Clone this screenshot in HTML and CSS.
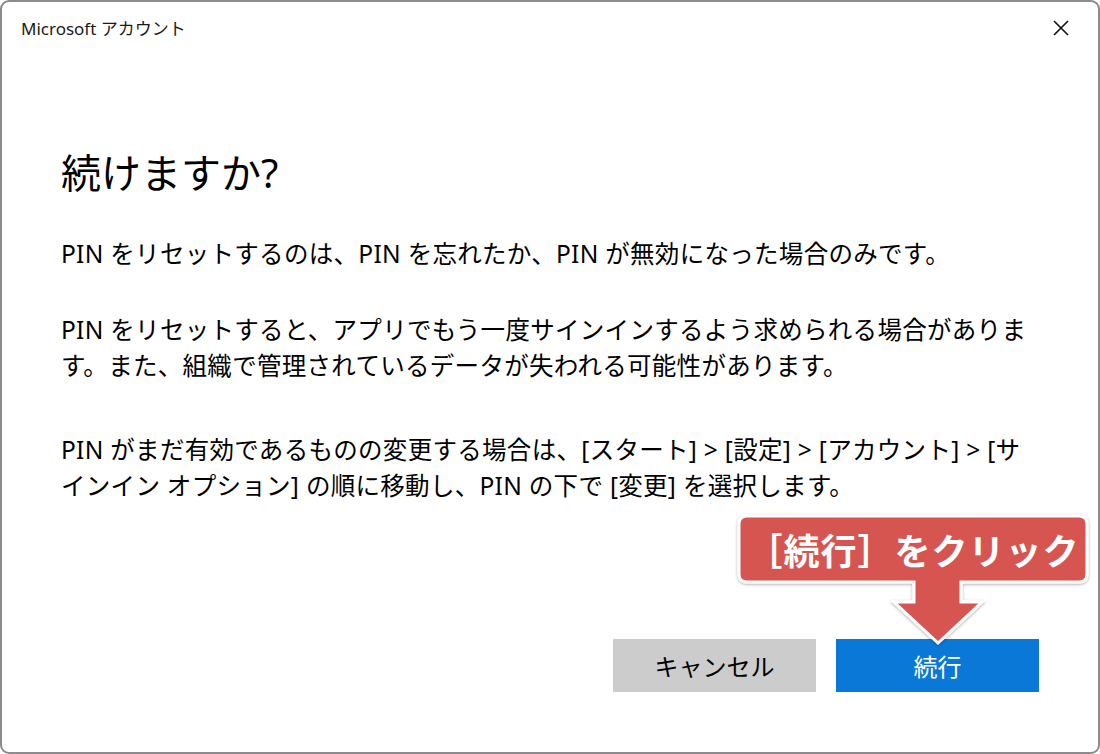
FILE: index.html
```html
<!DOCTYPE html>
<html lang="ja">
<head>
<meta charset="utf-8">
<title>Microsoft アカウント</title>
<link rel="stylesheet" href="styles.css">
</head>
<body>
<div class="window">
  <div class="titlebar">
    <span class="title">Microsoft アカウント</span>
    <span class="close">
      <svg width="16" height="16" viewBox="0 0 16 16"><path d="M1 1 L15 15 M15 1 L1 15" stroke="#111" stroke-width="1.6" fill="none"/></svg>
    </span>
  </div>
  <div class="content">
    <h1 class="heading">続けますか?</h1>
    <p class="para p1">PIN をリセットするのは、PIN を忘れたか、PIN が無効になった場合のみです。</p>
    <p class="para p2">PIN をリセットすると、アプリでもう一度サインインするよう求められる場合がありま<br>す。また、組織で管理されているデータが失われる可能性があります。</p>
    <p class="para p3">PIN がまだ有効であるものの変更する場合は、[スタート] &gt; [設定] &gt; [アカウント] &gt; [サ<br>インイン オプション] の順に移動し、PIN の下で [変更] を選択します。</p>
  </div>
  <div class="footer">
    <button class="btn cancel">キャンセル</button>
    <button class="btn primary">続行</button>
  </div>
  <div class="callout">
    <svg class="callout-shape" width="360" height="140" viewBox="-6 -6 360 140">
      <defs>
        <filter id="sh" x="-10%" y="-10%" width="120%" height="130%">
          <feDropShadow dx="0" dy="1" stdDeviation="1.5" flood-color="#000" flood-opacity="0.35"/>
        </filter>
      </defs>
      <path d="M8 0 H340 Q348 0 348 8 V58 Q348 66 340 66 H222 V86 H243 L199 127 L155 86 H175 V66 H8 Q0 66 0 58 V8 Q0 0 8 0 Z" fill="#d75451" stroke="#fff" stroke-width="3" stroke-linejoin="miter" filter="url(#sh)"/>
    </svg>
    <div class="callout-text">［続行］をクリック</div>
  </div>
</div>
</body>
</html>
```

FILE: styles.css
```css
* { box-sizing: border-box; }
html, body {
  margin: 0;
  padding: 0;
  width: 1100px;
  height: 754px;
  background: #fff;
  overflow: hidden;
}
body {
  font-family: "Noto Sans", "Noto Sans CJK JP", sans-serif;
  color: #000;
}
.window {
  position: relative;
  width: 1100px;
  height: 754px;
  border: 2px solid #8c8c8c;
  border-radius: 9px;
  background: #fff;
  display: flex;
  flex-direction: column;
}
.titlebar {
  height: 54px;
  display: flex;
  align-items: center;
  justify-content: space-between;
  padding: 0 29px 3px 19px;
}
.title {
  font-size: 17px;
  color: #1a1a1a;
  font-family: "Noto Sans", "Noto Sans CJK JP", sans-serif;
}
.close {
  display: flex;
  width: 16px;
  height: 16px;
}
.content {
  padding: 0 40px 0 59px;
  flex: 1;
}
.heading {
  margin: 92px 0 0 0;
  font-size: 40px;
  font-weight: 400;
  line-height: 50px;
}
.para {
  margin: 0;
  font-size: 24.5px;
  letter-spacing: 0.3px;
  line-height: 36px;
  white-space: nowrap;
}
.p1 { margin-top: 38px; }
.p2 { margin-top: 40px; }
.p3 { margin-top: 48px; }
.footer {
  display: flex;
  justify-content: flex-end;
  gap: 20px;
  padding: 0 59px 60px 0;
}
.btn {
  width: 203px;
  height: 53px;
  border: none;
  font-family: "Noto Sans", "Noto Sans CJK JP", sans-serif;
  font-size: 24px;
  padding: 0;
}
.cancel {
  background: #cccccc;
  color: #000;
}
.primary {
  background: #0a78d7;
  color: #fff;
}
.callout {
  position: absolute;
  left: 737px;
  top: 514px;
  width: 350px;
  height: 130px;
}
.callout-shape {
  position: absolute;
  left: -6px;
  top: -6px;
}
.callout-text {
  position: absolute;
  left: 0;
  top: 0;
  width: 348px;
  height: 66px;
  display: flex;
  align-items: center;
  justify-content: center;
  color: #fff;
  font-size: 36px;
  font-weight: 700;
  font-family: "Noto Sans CJK JP", sans-serif;
  letter-spacing: 1px;
}
```
